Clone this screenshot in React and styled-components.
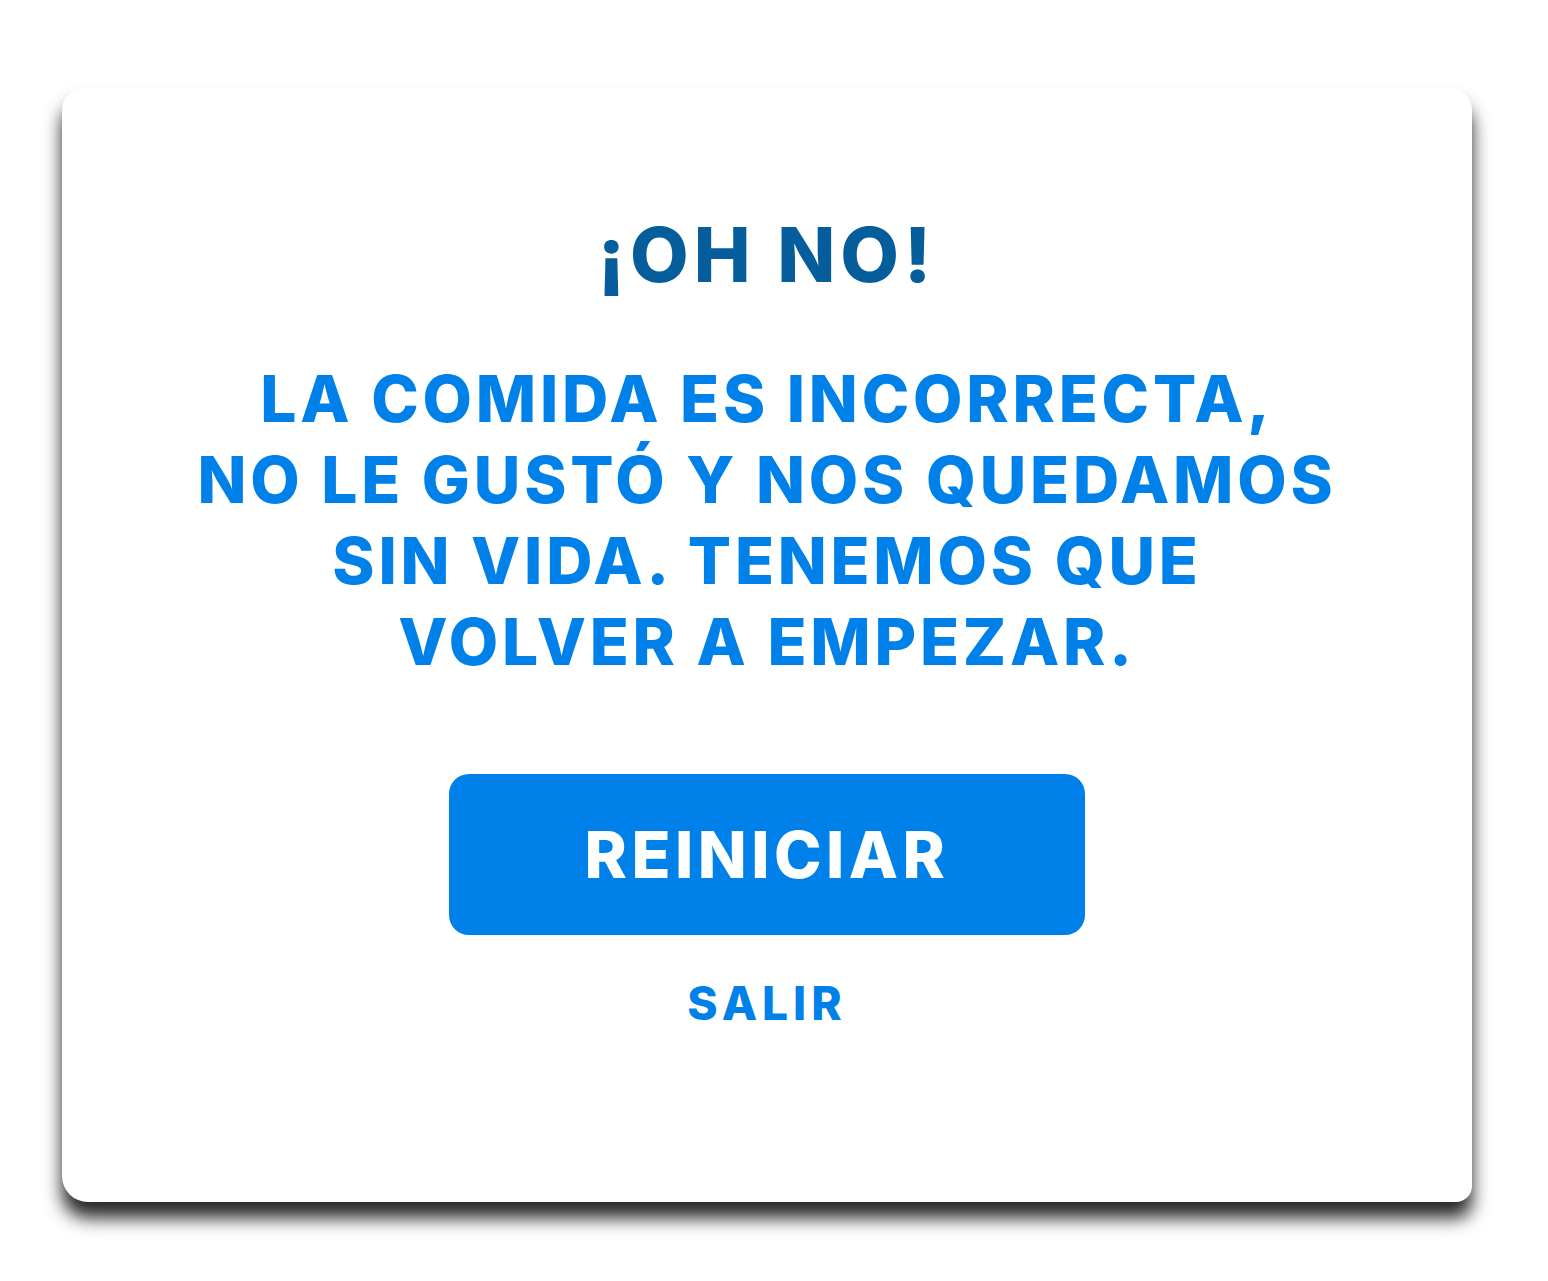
import React from 'react';
import styled, { createGlobalStyle } from 'styled-components';

const GlobalStyle = createGlobalStyle`
	html, body {
		margin: 0;
		padding: 0;
		background: #ffffff;
	}
	body {
		font-family: Inter, "Liberation Sans", sans-serif;
	}
`

const Page = styled.div`
	width: 1548px;
	height: 1281px;
	box-sizing: border-box;
	padding: 88px 0 0 62px;
	background: #ffffff;
`

const Card = styled.div`
	width: 1410px;
	height: 1114px;
	box-sizing: border-box;
	background: #ffffff;
	border-radius: 22px 22px 16px 26px;
	box-shadow: 0 16px 18px rgba(0, 0, 0, 0.85);
	display: flex;
	flex-direction: column;
	align-items: center;
	padding-top: 126px;
`

const Title = styled.h1`
	margin: 0;
	color: #055e9b;
	font-size: 76px;
	font-weight: 800;
	line-height: 80px;
	letter-spacing: 5px;
`

const Message = styled.p`
	margin: 64px 0 0;
	color: #0081ea;
	font-size: 64px;
	font-weight: 800;
	line-height: 81px;
	text-align: center;
	letter-spacing: 3.8px;
`

const Line = styled.span`
	display: block;
`

const RestartButton = styled.button`
	margin-top: 92px;
	width: 636px;
	height: 161px;
	border: none;
	border-radius: 20px;
	background: #0081ea;
	color: #ffffff;
	font-family: inherit;
	font-size: 64px;
	font-weight: 800;
	letter-spacing: 4.5px;
	cursor: pointer;
`

const ExitLink = styled.a`
	margin-top: 40px;
	color: #0081ea;
	font-size: 46px;
	font-weight: 800;
	letter-spacing: 5px;
	text-decoration: none;
	cursor: pointer;
`

const lines = [
	'LA COMIDA ES INCORRECTA,',
	'NO LE GUSTÓ Y NOS QUEDAMOS',
	'SIN VIDA. TENEMOS QUE',
	'VOLVER A EMPEZAR.',
]

export default function App() {
	return (
		<>
			<GlobalStyle />
			<Page>
				<Card>
					<Title>¡OH NO!</Title>
					<Message>
						{lines.map((l) => <Line key={l}>{l}</Line>)}
					</Message>
					<RestartButton>REINICIAR</RestartButton>
					<ExitLink>SALIR</ExitLink>
				</Card>
			</Page>
		</>
	);
}
